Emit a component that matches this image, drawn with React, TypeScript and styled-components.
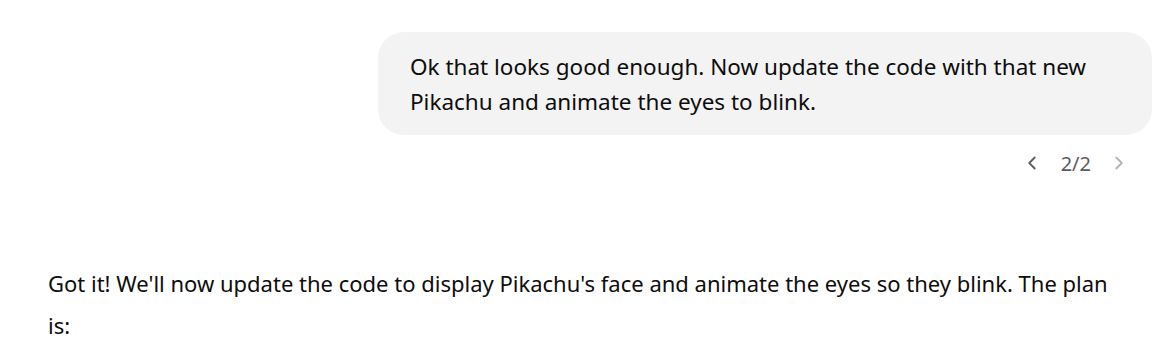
import React from 'react';
import styled, { createGlobalStyle } from 'styled-components';
import { ChevronLeft, ChevronRight } from 'lucide-react';

const GlobalStyle = createGlobalStyle`
    body {
        margin: 0;
        background-color: #ffffff;
        font-family: 'Segoe UI', 'Noto Sans', 'Open Sans', sans-serif;
        color: #0d0d0d;
    }
`;

const Thread = styled.main`
    display: flex;
    flex-direction: column;
    padding: 32px 10px 0 48px;
`;

const UserRow = styled.section`
    display: flex;
    justify-content: flex-end;
`;

const Bubble = styled.div`
    background-color: #f3f3f3;
    border-radius: 26px;
    max-width: 712px;
    padding: 17px 30px 16px 32px;
    font-size: 22.5px;
    line-height: 35px;
`;

const Pager = styled.nav`
    display: flex;
    align-items: center;
    justify-content: flex-end;
    height: 22px;
    margin-top: 17px;
    padding-right: 22px;
    color: #5d5d5d;
`;

const PageButton = styled.button<{ disabled?: boolean }>`
    display: flex;
    align-items: center;
    justify-content: center;
    background: none;
    border: none;
    padding: 0;
    color: ${(p) => (p.disabled ? '#b4b4b4' : '#5d5d5d')};
`;

const PageCount = styled.span`
    font-size: 20px;
    margin: 0 17px 0 18px;
`;

const Answer = styled.p`
    margin: 88px 38px 0 0;
    font-size: 22px;
    line-height: 42px;
`;

const App: React.FC = () => {
    return (
        <>
            <GlobalStyle />
            <Thread>
                <UserRow>
                    <Bubble>
                        Ok that looks good enough. Now update the code with that new Pikachu and animate the eyes to
                        blink.
                    </Bubble>
                </UserRow>
                <Pager>
                    <PageButton>
                        <ChevronLeft size={22} strokeWidth={2} />
                    </PageButton>
                    <PageCount>2/2</PageCount>
                    <PageButton disabled>
                        <ChevronRight size={22} strokeWidth={2} />
                    </PageButton>
                </Pager>
                <Answer>
                    Got it! We'll now update the code to display Pikachu's face and animate the eyes so they blink. The
                    plan is:
                </Answer>
            </Thread>
        </>
    );
};

export default App;
